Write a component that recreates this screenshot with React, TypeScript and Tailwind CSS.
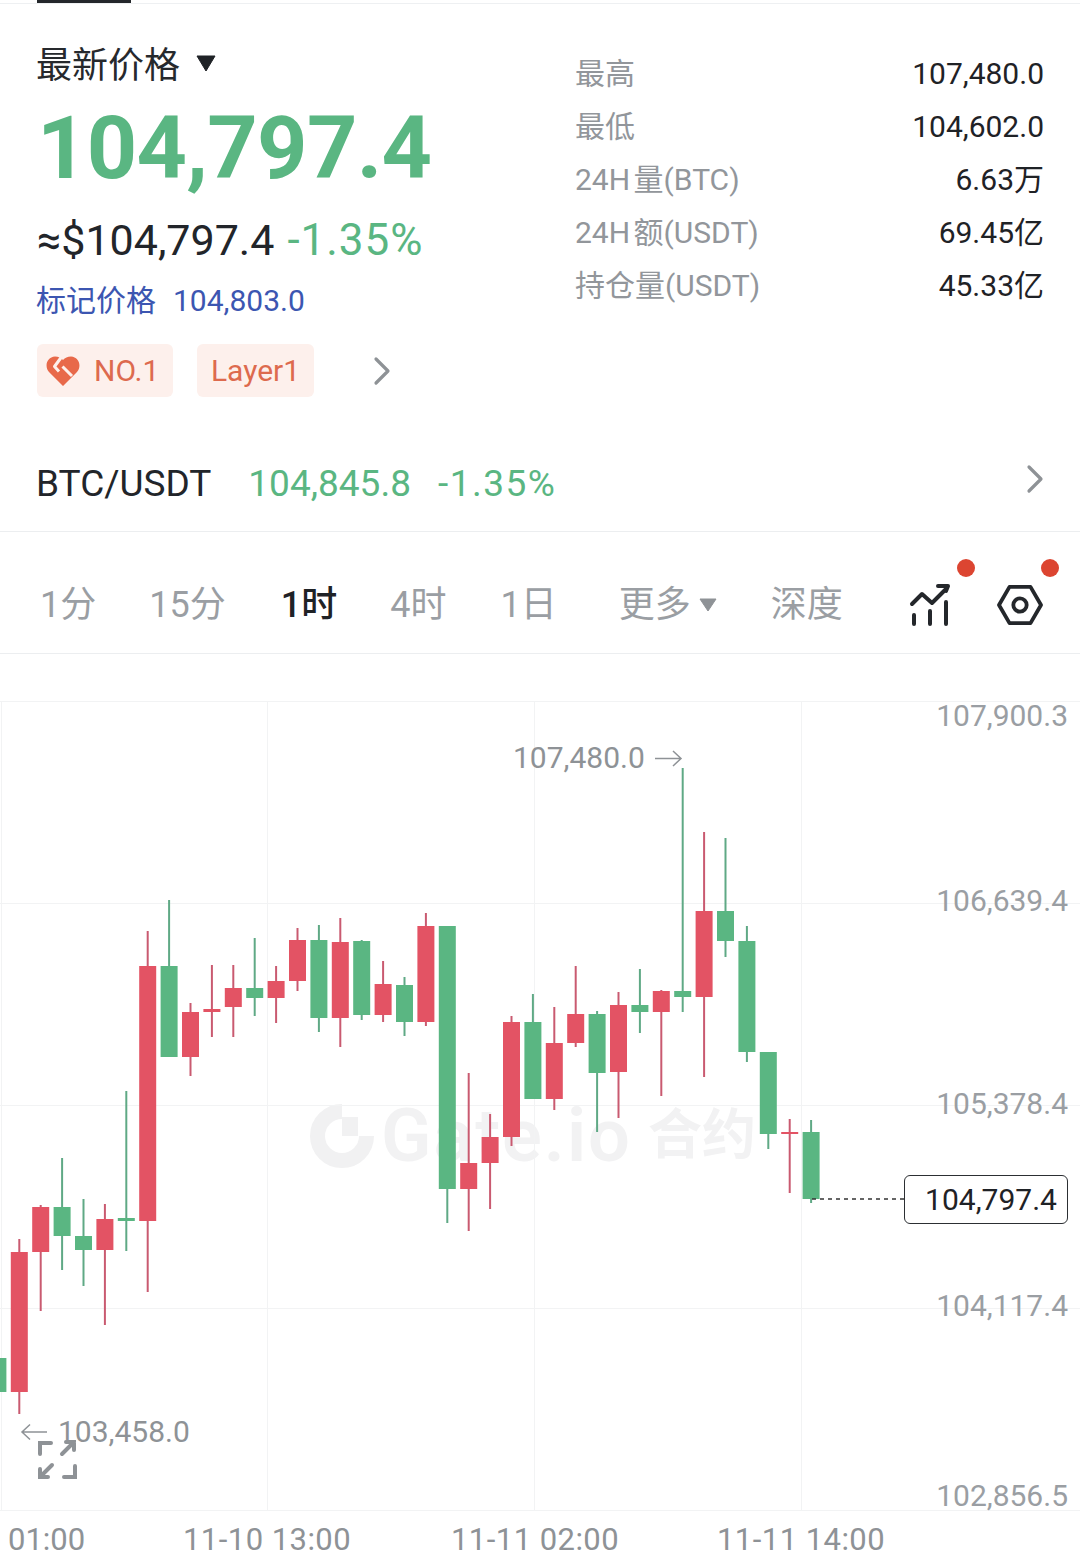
const GREEN = "#5ab682";
const GREEN_WICK = "#5fa985";
const RED = "#e35364";
const RED_WICK = "#c95a70";

// up = red body, [x, wickTop, bodyTop, bodyBottom, wickBottom]
type Candle = { x: number; hi: number; top: number; bot: number; lo: number; red: boolean };

const raw: [number, number, number, number, boolean][] = [
  [1358, 1358, 1392, 1392, false],
  [1239, 1252, 1392, 1414, true],
  [1205, 1207, 1252, 1311, true],
  [1158, 1207, 1236, 1270, false],
  [1199, 1236, 1250, 1286, false],
  [1204, 1219, 1250, 1325, true],
  [1091, 1218, 1221, 1251, false],
  [931, 966, 1221, 1292, true],
  [900, 966, 1057, 1057, false],
  [1003, 1012, 1057, 1076, true],
  [965, 1009, 1012, 1037, true],
  [965, 988, 1007, 1037, true],
  [938, 988, 998, 1016, false],
  [966, 981, 998, 1023, true],
  [928, 940, 981, 991, true],
  [925, 940, 1018, 1032, false],
  [918, 942, 1018, 1047, true],
  [940, 941, 1015, 1020, false],
  [961, 984, 1015, 1022, true],
  [977, 985, 1022, 1036, false],
  [913, 926, 1022, 1026, true],
  [926, 926, 1189, 1223, false],
  [1073, 1163, 1189, 1231, true],
  [1114, 1137, 1163, 1209, true],
  [1016, 1022, 1137, 1146, true],
  [994, 1022, 1099, 1099, false],
  [1007, 1043, 1099, 1110, true],
  [966, 1014, 1043, 1047, true],
  [1011, 1014, 1073, 1132, false],
  [992, 1005, 1072, 1118, true],
  [969, 1005, 1012, 1033, false],
  [990, 991, 1012, 1096, true],
  [768, 991, 997, 1012, false],
  [832, 911, 997, 1077, true],
  [838, 911, 941, 957, false],
  [926, 941, 1052, 1062, false],
  [1052, 1052, 1134, 1149, false],
  [1119, 1132, 1134, 1193, true],
  [1120, 1132, 1199, 1203, false],
];

const CHART_TOP = 654;

const candles: Candle[] = raw.map(([hi, top, bot, lo, red], i) => ({
  x: -2.1 + 21.4 * i,
  hi: hi - CHART_TOP,
  top: top - CHART_TOP,
  bot: bot - CHART_TOP,
  lo: lo - CHART_TOP,
  red,
}));

const stats = [
  ["最高", "107,480.0"],
  ["最低", "104,602.0"],
  ["24H 量(BTC)", "6.63万"],
  ["24H 额(USDT)", "69.45亿"],
  ["持仓量(USDT)", "45.33亿"],
];

function Chevron({ className }: { className: string }) {
  return (
    <svg viewBox="0 0 18 30" className={className} fill="none" stroke="#8e9296" strokeWidth="3.2" strokeLinecap="round" strokeLinejoin="round">
      <path d="M3 3l12 12L3 27" />
    </svg>
  );
}

function Heart() {
  return (
    <svg viewBox="0 0 34 30" className="w-[34px] h-[30px]">
      <path d="M17 30L3 16C-2 10 1 1 9 0.500C12.500 0.500 15 2 17 4C19 2 21.500 0.500 25 0.500C33 1 36 10 31 16Z" fill="#e8694a" />
      <path d="M15.500 1L8.500 10.500L13 15.500M16.500 10.500L26 20" fill="none" stroke="#fdf0ec" strokeWidth="3" strokeLinejoin="round" />
    </svg>
  );
}

function Chart() {
  return (
    <div className="relative h-[903px]">
      {/* watermark */}
      <div className="absolute left-[309px] top-[449px] flex items-center text-[#f2f2f3]">
        <svg viewBox="0 0 68 64" className="w-[68px] h-[64px]">
          <path d="M33 7.500A24.500 24.500 0 1 0 57.500 32" fill="none" stroke="#f1f1f2" strokeWidth="15" />
          <rect x="33" y="13" width="16" height="19" fill="#f1f1f2" />
        </svg>
        <span className="ml-[4px] text-[74px] leading-[66px] font-semibold tracking-[2px]">Gate.io</span>
        <span className="ml-[16px] text-[54px] leading-[66px] font-semibold">合约</span>
      </div>

      <svg viewBox="0 0 1080 903" className="absolute inset-0 w-[1080px] h-[903px]">
        {[47, 249, 451, 654, 856].map((y) => (
          <line key={y} x1="0" x2="1080" y1={y + 0.5} y2={y + 0.5} stroke="#f2f3f4" />
        ))}
        {[1, 267, 534, 801].map((x) => (
          <line key={x} x1={x + 0.5} x2={x + 0.5} y1="47" y2="856" stroke="#f2f3f4" />
        ))}
        {candles.map((c) => (
          <g key={c.x}>
            <line x1={c.x} x2={c.x} y1={c.hi} y2={c.lo} stroke={c.red ? RED_WICK : GREEN_WICK} strokeWidth="2" />
            <rect x={c.x - 8.500} y={c.top} width="17" height={c.bot - c.top} fill={c.red ? RED : GREEN} />
          </g>
        ))}
        <line x1="812" x2="904" y1="545" y2="545" stroke="#333" strokeWidth="1.500" strokeDasharray="4 4" />
        {/* high and low arrows */}
        <path d="M655 104.500h26M673 97l8 7.500-8 7.500" fill="none" stroke="#8e9296" strokeWidth="1.500" />
        <path d="M47 778H22M30 770.500l-8 7.500 8 7.500" fill="none" stroke="#8e9296" strokeWidth="1.500" />
        {/* fullscreen */}
        <g fill="none" stroke="#8e9296" strokeWidth="4" strokeLinecap="round">
          <path d="M40 800v-11h11M75 812v11H64" />
          <path d="M62 800l12-12M66 788h8v8M52 811l-12 12M40 815v8h8" />
        </g>
      </svg>

      <span className="absolute left-[513px] top-[85px] text-[30px] leading-[38px] text-[#8e9296]">107,480.0</span>
      <span className="absolute left-[58px] top-[759px] text-[30px] leading-[38px] text-[#8e9296]">103,458.0</span>

      {[
        ["107,900.3", 62],
        ["106,639.4", 247],
        ["105,378.4", 450],
        ["104,117.4", 652],
        ["102,856.5", 842],
      ].map(([label, y]) => (
        <span key={label} className="absolute right-[12px] text-[30px] leading-[0px] text-[#9a9ea3]" style={{ top: y as number }}>
          {label}
        </span>
      ))}

      <div className="absolute left-[904px] top-[521px] w-[164px] h-[49px] pl-[10px] rounded-[6px] border-[1.5px] border-[#2c2f33] bg-white flex items-center justify-center text-[30px] text-[#1f2226]">
        104,797.4
      </div>

      <span className="absolute left-[8px] top-[871px] text-[31px] leading-[30px] text-[#8e9296]">01:00</span>
      <span className="absolute left-[183px] top-[871px] text-[31px] leading-[30px] tracking-[0.45px] text-[#8e9296]">11-10 13:00</span>
      <span className="absolute left-[451px] top-[871px] text-[31px] leading-[30px] tracking-[0.45px] text-[#8e9296]">11-11 02:00</span>
      <span className="absolute left-[717px] top-[871px] text-[31px] leading-[30px] tracking-[0.45px] text-[#8e9296]">11-11 14:00</span>
    </div>
  );
}

export default function App() {
  return (
    <div className="w-[1080px] h-[1557px] overflow-hidden bg-white font-['Roboto','Noto_Sans_CJK_SC',sans-serif]">
      {/* tab underline */}
      <div className="h-[4px] border-b border-[#eef0f2]">
        <div className="ml-[37px] w-[94px] h-[3px] bg-[#24272b]" />
      </div>

      {/* price summary */}
      <div className="flex h-[426px]">
        <div className="w-[575px] pl-[36px] shrink-0">
          <div className="mt-[38px] h-[48px] flex items-center text-[36px] leading-[48px] text-[#26292d]">
            最新价格
            <svg viewBox="0 0 20 17" className="ml-[16px] mb-[6px] w-[20px] h-[17px]">
              <path d="M1 1h18L10 16Z" fill="#1f2226" stroke="#1f2226" strokeLinejoin="round" />
            </svg>
          </div>
          <div className="mt-[8px] ml-[1px] text-[88px] leading-[100px] font-bold tracking-[-0.7px] text-[#5ab682]">104,797.4</div>
          <div className="mt-[15px] ml-[1px] h-[54px] flex items-center text-[43px] leading-[54px]">
            <span className="text-[#22252a]">≈$104,797.4</span>
            <span className="ml-[13px] text-[44px] tracking-[1px] text-[#5ab682]">-1.35%</span>
          </div>
          <div className="mt-[13px] h-[40px] flex items-center text-[30px] text-[#3c56b1]">
            <span>标记价格</span>
            <span className="ml-[17px]">104,803.0</span>
          </div>
          <div className="mt-[24px] ml-[1px] flex items-center">
            <div className="w-[136px] h-[53px] rounded-[6px] bg-[#fdf0ec] flex items-center pl-[9px] text-[30px] text-[#dd6a4e]">
              <Heart />
              <span className="ml-[14px]">NO.1</span>
            </div>
            <div className="ml-[24px] w-[117px] h-[53px] rounded-[6px] bg-[#fdf0ec] flex items-center justify-center text-[30px] text-[#dd6a4e]">
              Layer1
            </div>
            <Chevron className="ml-[59px] w-[18px] h-[30px]" />
          </div>
        </div>
        <div className="flex-1 pr-[36px] pt-[43px] flex flex-col">
          {stats.map(([label, value]) => (
            <div key={label} className="h-[53px] flex items-center justify-between text-[30px]">
              <span className="text-[#92969b] [word-spacing:-4px]">{label}</span>
              <span className="text-[#1f2226]">{value}</span>
            </div>
          ))}
        </div>
      </div>

      {/* spot pair */}
      <div className="h-[102px] pl-[36px] pr-[36px] pt-[6px] flex items-center border-b border-[#eceef0] text-[37px]">
        <span className="text-[#22252a]">BTC/USDT</span>
        <span className="ml-[37px] text-[#5ab682]">104,845.8</span>
        <span className="ml-[27px] tracking-[1.5px] text-[#5ab682]">-1.35%</span>
        <Chevron className="ml-auto mb-[10px] w-[18px] h-[30px]" />
      </div>

      {/* intervals */}
      <div className="relative h-[122px] pl-[40px] pt-[24px] flex items-center border-b border-[#eceef0] text-[36px] text-[#9a9ea3]">
        <span>1分</span>
        <span className="ml-[53px]">15分</span>
        <span className="ml-[55px] font-medium text-[#1f2226]">1时</span>
        <span className="ml-[53px]">4时</span>
        <span className="ml-[54px]">1日</span>
        <span className="ml-[62px]">更多</span>
        <svg viewBox="0 0 18 14" className="ml-[8px] w-[18px] h-[14px]">
          <path d="M1 1h16L9 13Z" fill="#8e9296" stroke="#8e9296" strokeLinejoin="round" />
        </svg>
        <span className="ml-[54px]">深度</span>
        <svg viewBox="0 0 44 44" className="ml-[66px] w-[44px] h-[44px]" fill="none" stroke="#24272b" strokeWidth="4" strokeLinecap="round" strokeLinejoin="round">
          <path d="M3 21L13 11l10 9L38 5M29 3h10l-2 5" />
          <path d="M5 32v9M21 28v13M37 19v22" />
        </svg>
        <svg viewBox="0 0 48 44" className="ml-[44px] w-[46px] h-[42px]" fill="none" stroke="#24272b" strokeWidth="4" strokeLinejoin="round">
          <path d="M13 3h22l11 19-11 19H13L2 22Z" />
          <circle cx="24" cy="22" r="7" />
        </svg>
        <span className="absolute left-[957px] top-[27px] w-[18px] h-[18px] rounded-full bg-[#dc4531]" />
        <span className="absolute left-[1041px] top-[27px] w-[18px] h-[18px] rounded-full bg-[#dc4531]" />
      </div>

      <Chart />
    </div>
  );
}
